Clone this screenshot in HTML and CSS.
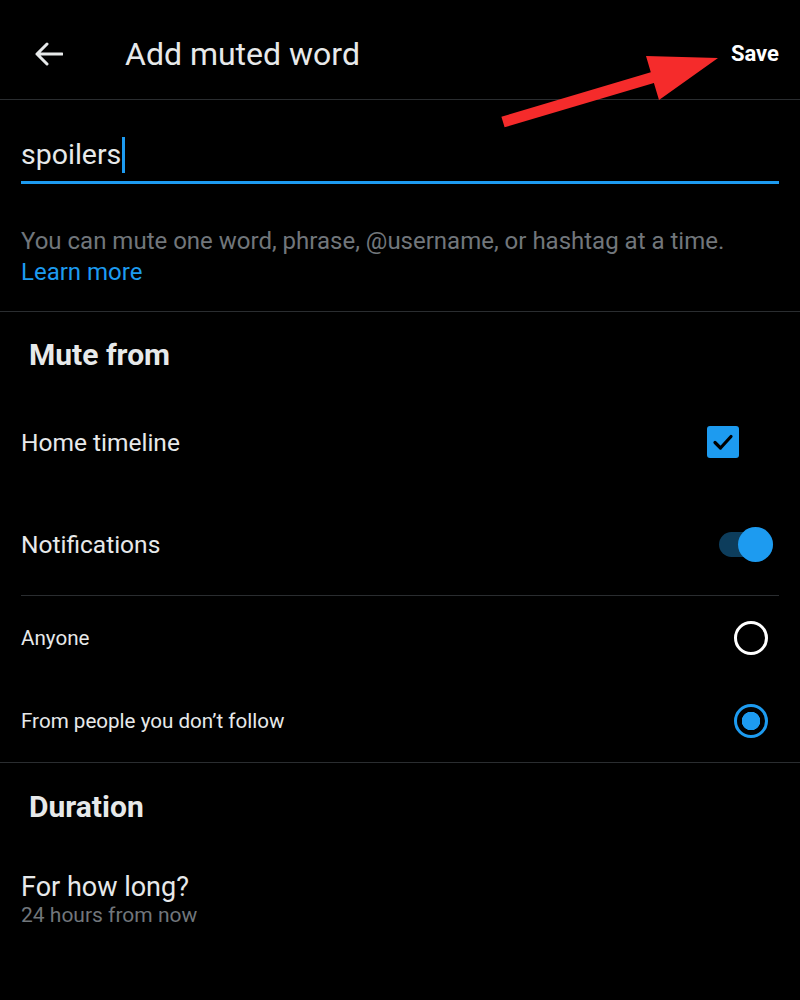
FILE: index.html
```html
<!DOCTYPE html>
<html lang="en">
<head>
    <meta charset="UTF-8">
    <meta name="viewport" content="width=device-width, initial-scale=1.0">
    <title>Add muted word</title>
    <link rel="stylesheet" href="styles.css">
</head>
<body>
    <div class="screen">
        <header class="topbar">
            <svg class="back" width="28" height="24" viewBox="0 0 28 24">
                <path d="M27 12H2M12 2L2 12l10 10" fill="none" stroke="#e7e9ea" stroke-width="3" stroke-linecap="round" stroke-linejoin="round"/>
            </svg>
            <h1 class="title">Add muted word</h1>
            <span class="save">Save</span>
        </header>

        <div class="word-input">
            <span class="word">spoilers</span><span class="cursor"></span>
        </div>

        <p class="hint">You can mute one word, phrase, @username, or hashtag at a time. <a href="#" class="link">Learn more</a></p>

        <section class="group">
            <h2 class="group-title">Mute from</h2>
            <div class="row row-tall">
                <span class="row-label">Home timeline</span>
                <span class="checkbox">
                    <svg width="24" height="24" viewBox="0 0 24 24">
                        <path d="M4 12.5l5.5 5.5L20 6.5" fill="none" stroke="#000" stroke-width="3.2" stroke-linecap="round" stroke-linejoin="round"/>
                    </svg>
                </span>
            </div>
            <div class="row row-tall">
                <span class="row-label">Notifications</span>
                <span class="toggle"><span class="knob"></span></span>
            </div>
            <div class="inner-divider"></div>
            <div class="row row-short">
                <span class="row-label small">Anyone</span>
                <span class="radio"></span>
            </div>
            <div class="row row-short">
                <span class="row-label small">From people you don’t follow</span>
                <span class="radio checked"></span>
            </div>
        </section>

        <section class="group">
            <h2 class="group-title">Duration</h2>
            <div class="duration">
                <div class="duration-label">For how long?</div>
                <div class="duration-value">24 hours from now</div>
            </div>
        </section>

        <!-- annotation arrow pointing at Save -->
        <svg class="pointer" width="800" height="140" viewBox="0 0 800 140">
            <polygon points="501.4,116.7 650.8,72.2 646,56 718,58 659,100 653.9,82.9 504.6,127.3" fill="#f52b2b"/>
        </svg>
    </div>
</body>
</html>
```

FILE: styles.css
```css
body {
    margin: 0;
    background-color: #000;
    font-family: Roboto, "Noto Sans", sans-serif;
    color: #e7e9ea;
}

.screen {
    position: relative;
    width: 800px;
    height: 1000px;
    overflow: hidden;
}

.topbar {
    display: flex;
    align-items: center;
    height: 100px;
    padding: 8px 21px 0 35px;
    box-sizing: border-box;
    border-bottom: 1px solid #2a2d30;
}

.back {
    flex-shrink: 0;
}

.title {
    margin: 0 0 0 62px;
    font-size: 32px;
    font-weight: 400;
    flex: 1;
}

.save {
    font-size: 22px;
    font-weight: 700;
    color: #fff;
}

.word-input {
    margin: 0 21px;
    padding: 36px 0 7px;
    height: 38px;
    line-height: 38px;
    border-bottom: 3px solid #1d9bf0;
    display: flex;
    align-items: center;
}

.word {
    font-size: 28.5px;
}

.cursor {
    display: inline-block;
    width: 3px;
    height: 36px;
    margin-left: 1px;
    background-color: #1d9bf0;
}

.hint {
    margin: 0;
    padding: 42px 21px 23px;
    font-size: 24px;
    line-height: 31px;
    color: #71767b;
    border-bottom: 1px solid #2a2d30;
}

.link {
    display: block;
    color: #1d9bf0;
    text-decoration: none;
}

.group-title {
    margin: 0;
    padding: 26px 29px 0;
    font-size: 30px;
    line-height: 34px;
    font-weight: 700;
}

.row {
    display: flex;
    align-items: center;
    justify-content: space-between;
    padding: 0 21px;
}

.row-tall {
    height: 102px;
}

.group .row-tall:first-of-type {
    margin-top: 19px;
}

.row-short {
    height: 83px;
}

.row-label {
    font-size: 24.5px;
}

.row-label.small {
    font-size: 20.6px;
}

.checkbox {
    display: flex;
    align-items: center;
    justify-content: center;
    width: 32px;
    height: 32px;
    border-radius: 3px;
    background-color: #1d9bf0;
    margin-right: 40px;
}

.toggle {
    position: relative;
    width: 54px;
    height: 25px;
    border-radius: 13px;
    background-color: #0d3d5c;
    margin-right: 6px;
}

.knob {
    position: absolute;
    right: 0;
    top: -5px;
    width: 35px;
    height: 35px;
    border-radius: 50%;
    background-color: #1d9bf0;
}

.inner-divider {
    height: 1px;
    margin: 0 21px;
    background-color: #2a2d30;
}

.radio {
    width: 28px;
    height: 28px;
    border: 3px solid #fff;
    border-radius: 50%;
    margin-right: 11px;
    box-sizing: content-box;
}

.radio.checked {
    border-color: #1d9bf0;
    background: radial-gradient(circle, #1d9bf0 0 9px, transparent 9.5px);
}

.group + .group {
    border-top: 1px solid #2a2d30;
}

.group + .group .group-title {
    padding-top: 27px;
}

.duration {
    padding: 48px 21px 0;
}

.duration-label {
    font-size: 27px;
    line-height: 30px;
}

.duration-value {
    font-size: 21px;
    line-height: 26px;
    color: #71767b;
}

.pointer {
    position: absolute;
    left: 0;
    top: 0;
}
```
